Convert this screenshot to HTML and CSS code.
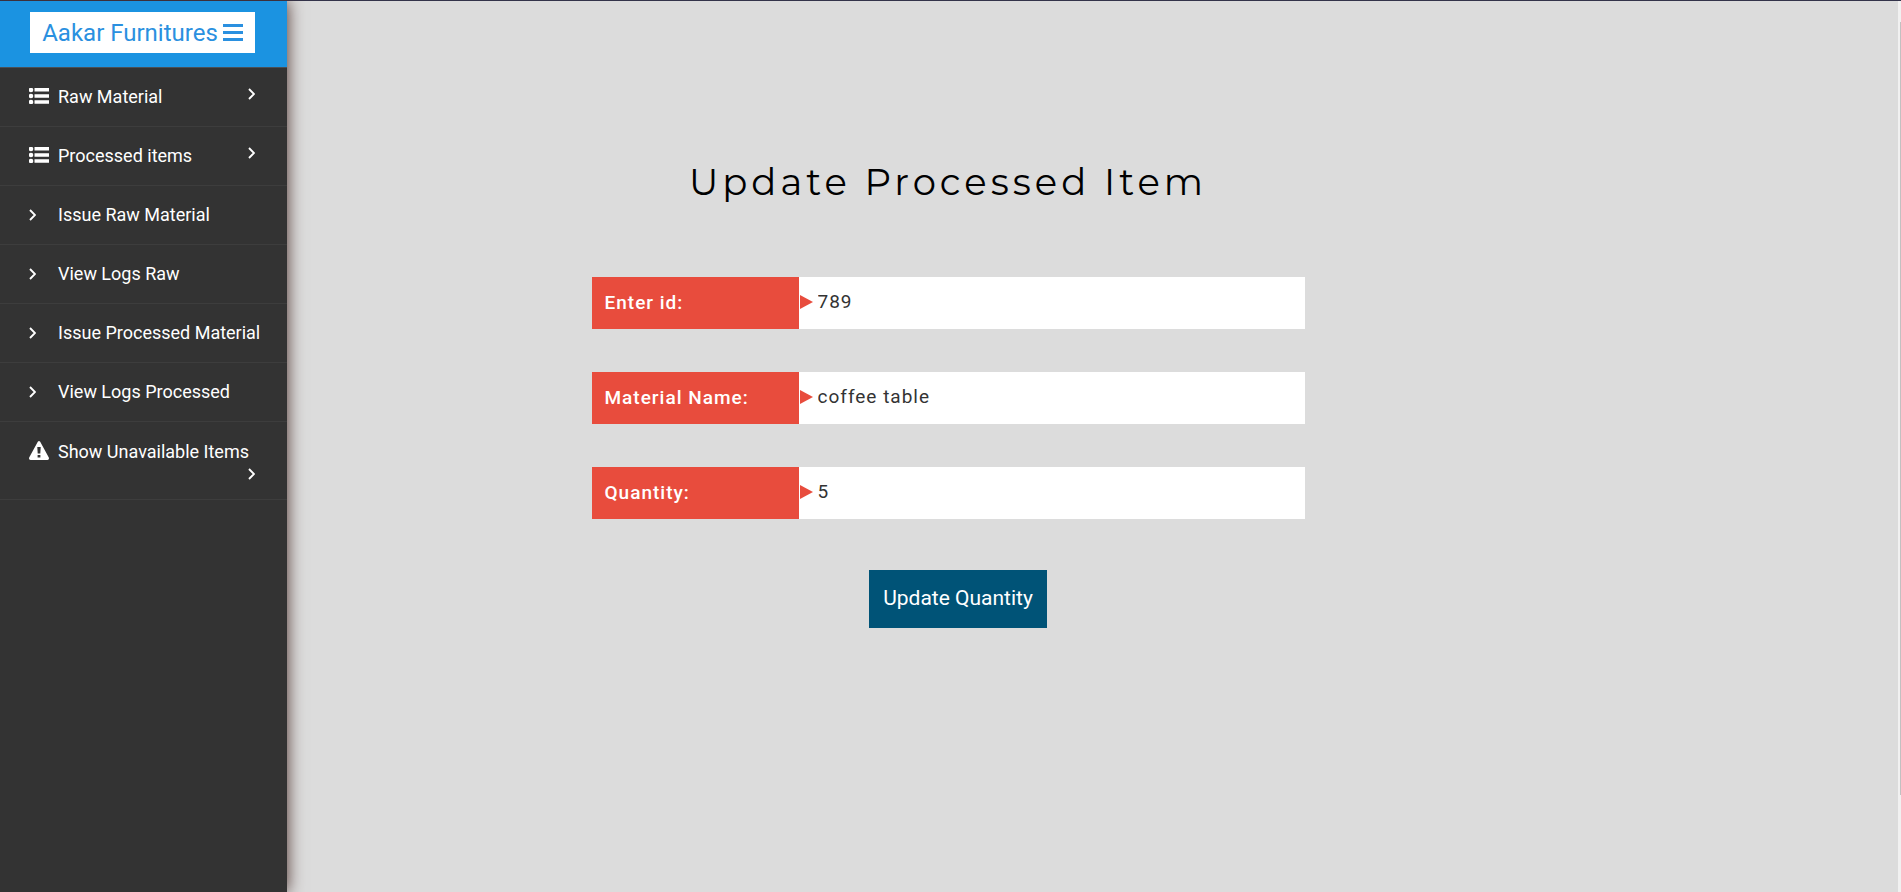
FILE: index.html
```
<!DOCTYPE html>
<html lang="en">
<head>
<meta charset="utf-8">
<title>Aakar Furnitures</title>
<link rel="stylesheet" href="styles.css">
</head>
<body>
<svg class="sprite" aria-hidden="true">
  <symbol id="list" viewBox="0 0 20 16">
    <circle cx="2" cy="2" r="2.300"/><circle cx="2" cy="8" r="2.300"/><circle cx="2" cy="14" r="2.300"/>
    <path d="M5.500 0h14.500v3.500H5.500zM5.500 6.200h14.500v3.500H5.500zM5.500 12.300h14.500v3.500H5.500z"/>
  </symbol>
  <symbol id="angle" viewBox="0 0 7 12">
    <path d="M1 1l5 5-5 5" fill="none" stroke="currentColor" stroke-width="1.900"/>
  </symbol>
  <symbol id="warn" viewBox="0 0 20 19">
    <path fill-rule="evenodd" d="M8.800.8Q10-.8 11.200.8L19.800 16.500Q20.500 18.700 18.500 19H1.500Q-.5 18.700.2 16.500zM8.300 6l.4 6.500h2.600l.4-6.500zM8.600 14v2.500h2.800V14z"/>
  </symbol>
  <symbol id="bars" viewBox="0 0 20 17">
    <path d="M0 0h20v3H0zM0 7h20v3H0zM0 14h20v3H0z"/>
  </symbol>
</svg>
<div class="page">
  <aside class="sidebar">
    <header class="sidebar-head">
      <button class="brand" type="button">Aakar Furnitures <svg class="icon-bars"><use href="#bars"/></svg></button>
    </header>
    <nav class="menu">
      <a class="item" href="#"><span class="lead"><svg class="icon-list"><use href="#list"/></svg></span><span class="name">Raw Material</span><svg class="icon-angle"><use href="#angle"/></svg></a>
      <a class="item" href="#"><span class="lead"><svg class="icon-list"><use href="#list"/></svg></span><span class="name">Processed items</span><svg class="icon-angle"><use href="#angle"/></svg></a>
      <a class="item" href="#"><span class="lead"><svg class="icon-angle"><use href="#angle"/></svg></span><span class="name">Issue Raw Material</span></a>
      <a class="item" href="#"><span class="lead"><svg class="icon-angle"><use href="#angle"/></svg></span><span class="name">View Logs Raw</span></a>
      <a class="item" href="#"><span class="lead"><svg class="icon-angle"><use href="#angle"/></svg></span><span class="name">Issue Processed Material</span></a>
      <a class="item" href="#"><span class="lead"><svg class="icon-angle"><use href="#angle"/></svg></span><span class="name">View Logs Processed</span></a>
      <a class="item item-tall" href="#"><span class="lead"><svg class="icon-warn"><use href="#warn"/></svg></span><span class="name">Show Unavailable Items</span><svg class="icon-angle"><use href="#angle"/></svg></a>
    </nav>
  </aside>
  <main class="content">
    <h1 class="title">Update Processed Item</h1>
    <form class="form">
      <div class="field">
        <label class="label" for="item-id">Enter id:</label>
        <div class="box"><input class="input" id="item-id" type="text" value="789"></div>
      </div>
      <div class="field">
        <label class="label" for="item-name">Material Name:</label>
        <div class="box"><input class="input" id="item-name" type="text" value="coffee table"></div>
      </div>
      <div class="field">
        <label class="label" for="item-qty">Quantity:</label>
        <div class="box"><input class="input" id="item-qty" type="text" value="5"></div>
      </div>
      <button class="submit" type="button">Update Quantity</button>
    </form>
  </main>
  <div class="track"><div class="thumb"></div></div>
</div>
</body>
</html>
```
FILE: styles.css
```
* {
  box-sizing: border-box;
}

body {
  margin: 0;
  background: #dcdcdc;
  font-family: Roboto, sans-serif;
}

.sprite {
  display: none;
}

svg {
  fill: currentColor;
}

.page {
  display: flex;
  min-height: 100vh;
  border-top: 1px solid #33334a;
}

/* Sidebar */
.sidebar {
  flex: 0 0 287px;
  background: #333333;
  box-shadow: 0 0 16px #4a2f2a;
}

.sidebar-head {
  padding: 11px 32px 14px 30px;
  background: #1b93e1;
  border-bottom: 1px solid #4a4f55;
}

.brand {
  display: flex;
  align-items: center;
  justify-content: center;
  gap: 5px;
  width: 100%;
  height: 41px;
  padding: 0;
  border: 0;
  background: #ffffff;
  color: #2a90e0;
  font: 400 24px/40px Roboto, sans-serif;
}

.icon-bars {
  width: 20px;
  height: 17px;
}

.item {
  display: flex;
  flex-wrap: wrap;
  align-items: center;
  align-content: center;
  height: 59px;
  padding: 0 24px 0 29px;
  border-bottom: 1px solid #3d3d3d;
  color: #ffffff;
  font-size: 18px;
  line-height: 22px;
  text-decoration: none;
}

.lead {
  display: flex;
  align-items: center;
  width: 29px;
  height: 22px;
}

.icon-list {
  width: 20px;
  height: 16px;
  margin-bottom: 2px;
  overflow: visible;
}

.icon-angle {
  width: 7px;
  height: 12px;
}

.icon-warn {
  width: 20px;
  height: 19px;
  margin-bottom: 3px;
}

.name + .icon-angle {
  margin: 0 8px 6px auto;
}

.item-tall {
  height: 78px;
}

.item-tall .name {
  flex: 0 0 200px;
}

.item-tall .name + .icon-angle {
  margin: 5px 8px 0 auto;
}

/* Form */
.content {
  flex: 1;
  padding: 157px 289px 40px 0;
}

.title {
  margin: 0 0 71px;
  color: #000000;
  font: 400 37px/48px Montserrat, Inter, sans-serif;
  letter-spacing: 4px;
  text-align: center;
}

.form {
  display: flex;
  flex-direction: column;
  gap: 43px;
  max-width: 713px;
  margin: 0 auto;
}

.field {
  display: flex;
  height: 52px;
}

.label {
  flex: 0 0 207px;
  padding: 0 13px;
  background: #e84c3d;
  color: #ffffff;
  font-size: 19px;
  font-weight: 500;
  line-height: 52px;
  letter-spacing: 1px;
}

.box {
  display: flex;
  flex: 1;
  align-items: center;
  gap: 5px;
  padding: 0 0 3px 1px;
  background: #ffffff;
}

.box::before {
  content: "";
  border-left: 13px solid #e84c3d;
  border-top: 7px solid transparent;
  border-bottom: 7px solid transparent;
}

.input {
  flex: 1;
  min-width: 0;
  padding: 0;
  border: 0;
  outline: 0;
  background: transparent;
  color: #333333;
  font: 400 19px/24px Roboto, sans-serif;
  letter-spacing: 1px;
}

.submit {
  align-self: center;
  height: 58px;
  margin: 8px 0 0 20px;
  padding: 0 14px 2px;
  border: 0;
  background: #005377;
  color: #ffffff;
  font: 400 21px/28px Roboto, sans-serif;
}

/* Scroll track */
.track {
  flex: 0 0 3px;
  padding: 21px 0 97px 2px;
  background: #f1f1f1;
}

.thumb {
  height: 100%;
  background: #c1c1c1;
}
```
